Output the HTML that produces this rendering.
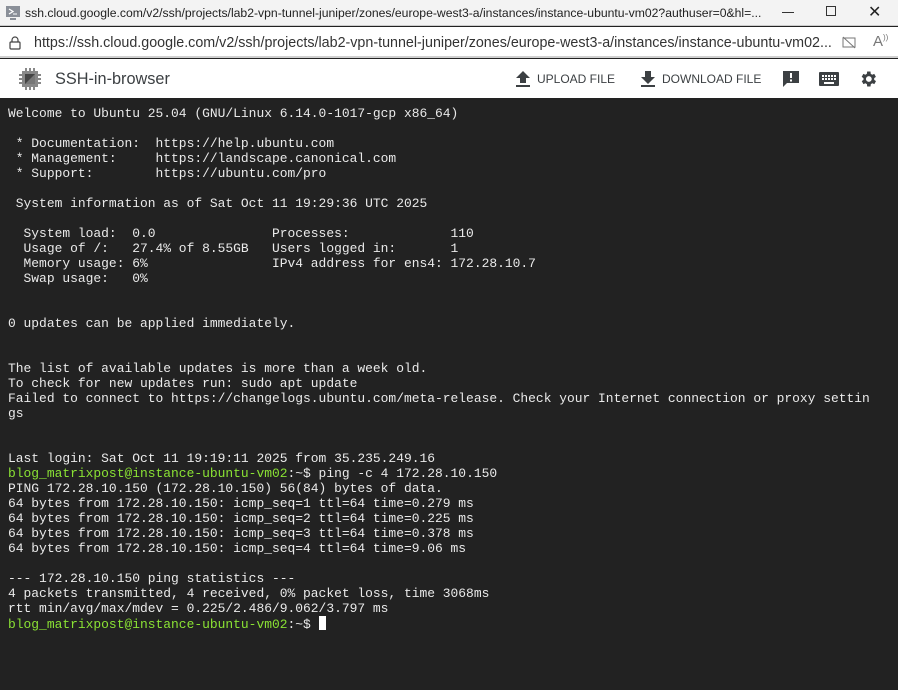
<!DOCTYPE html>
<html><head><meta charset="utf-8"><style>
*{margin:0;padding:0;box-sizing:border-box}
body{width:898px;height:690px;overflow:hidden;background:#222;font-family:"Liberation Sans",sans-serif}
.t1{position:absolute;left:0;top:0;width:898px;height:26px;background:#f3f3f3;border-bottom:1px solid #ccc;font-size:12.2px;color:#222}
.t2{position:absolute;left:0;top:27px;width:898px;height:31px;background:#fff;border-bottom:2px solid #d0d0d0;font-size:14.3px;color:#333}
.bar{position:absolute;left:0;top:59px;width:898px;height:39px;background:#fff}
.term{position:absolute;left:0;top:98px;width:898px;height:592px;background:#222;color:#eaeaea;font-family:"Liberation Mono",monospace;font-size:12.95px;line-height:15px;padding:8px 0 0 8px;white-space:pre}
.g{color:#8ae234}
.cur{display:inline-block;width:7px;height:14px;background:#fff;vertical-align:-2px}
.btn{position:absolute;top:13px;font-size:12px;color:#3c4043}
</style></head><body>
<div class="t1">
<svg style="position:absolute;left:5px;top:5px" width="16" height="16"><rect x="1" y="1" width="14" height="11" fill="#8a8f98"/><rect x="5" y="13" width="6" height="2" fill="#8a8f98"/><path d="M4 4l4 2.5L4 9" stroke="#fff" stroke-width="1.3" fill="none"/><path d="M8 9h4" stroke="#fff"/></svg>
<span style="position:absolute;left:25px;top:6px">ssh.cloud.google.com/v2/ssh/projects/lab2-vpn-tunnel-juniper/zones/europe-west3-a/instances/instance-ubuntu-vm02?authuser=0&amp;hl=...</span>
<span style="position:absolute;left:782px;top:12px;width:12px;height:1px;background:#333"></span>
<span style="position:absolute;left:826px;top:6px;width:10px;height:10px;border:1px solid #333"></span>
<span style="position:absolute;left:868px;top:2px;font-size:16px">✕</span>
</div>
<div class="t2">
<svg style="position:absolute;left:9px;top:9px" width="12" height="14"><path d="M3 6V4a3 3 0 0 1 6 0v2" stroke="#444" fill="none" stroke-width="1.2"/><rect x="1" y="6" width="10" height="7" rx="1" stroke="#444" fill="none" stroke-width="1.2"/></svg>
<span style="position:absolute;left:34px;top:8px">https://ssh.cloud.google.com/v2/ssh/projects/lab2-vpn-tunnel-juniper/zones/europe-west3-a/instances/instance-ubuntu-vm02...</span>
<svg style="position:absolute;left:842px;top:9px" width="14" height="13"><rect x="1" y="2" width="12" height="9" stroke="#777" fill="none"/><path d="M1 1l12 11" stroke="#777"/></svg>
<span style="position:absolute;left:873px;top:6px;font-size:15px;color:#777">A<sup style="font-size:8px">))</sup></span>
</div>
<div class="bar">
<svg style="position:absolute;left:18px;top:8px" width="24" height="24"><g fill="#888"><rect x="4" y="4" width="16" height="16"/><rect x="7" y="1" width="2" height="3"/><rect x="11" y="1" width="2" height="3"/><rect x="15" y="1" width="2" height="3"/><rect x="7" y="20" width="2" height="3"/><rect x="11" y="20" width="2" height="3"/><rect x="15" y="20" width="2" height="3"/><rect x="1" y="7" width="3" height="2"/><rect x="1" y="11" width="3" height="2"/><rect x="1" y="15" width="3" height="2"/><rect x="20" y="7" width="3" height="2"/><rect x="20" y="11" width="3" height="2"/><rect x="20" y="15" width="3" height="2"/></g><rect x="7" y="7" width="10" height="10" fill="#444"/><path d="M7 17L17 7V17Z" fill="#777"/></svg>
<span style="position:absolute;left:55px;top:11px;font-size:16.3px;color:#3c4043">SSH-in-browser</span>
<svg style="position:absolute;left:516px;top:12px" width="14" height="16"><path d="M7 0L0 7h4v5h6V7h4z M0 14h14v2H0z" fill="#3c4043"/></svg>
<span class="btn" style="left:537px">UPLOAD FILE</span>
<svg style="position:absolute;left:641px;top:12px" width="14" height="16"><path d="M4 0h6v6h4l-7 7-7-7h4z M0 14h14v2H0z" fill="#3c4043"/></svg>
<span class="btn" style="left:662px">DOWNLOAD FILE</span>
<svg style="position:absolute;left:782px;top:11px" width="18" height="18"><path d="M1 1h16v12H5l-4 4z" fill="#3c4043"/><rect x="8" y="3" width="2" height="5" fill="#fff"/><rect x="8" y="9.5" width="2" height="2" fill="#fff"/></svg>
<svg style="position:absolute;left:819px;top:13px" width="20" height="14"><rect x="0" y="0" width="20" height="14" rx="1" fill="#3c4043"/><g fill="#fff"><rect x="3" y="3" width="2" height="2"/><rect x="6" y="3" width="2" height="2"/><rect x="9" y="3" width="2" height="2"/><rect x="12" y="3" width="2" height="2"/><rect x="15" y="3" width="2" height="2"/><rect x="3" y="6" width="2" height="2"/><rect x="6" y="6" width="2" height="2"/><rect x="9" y="6" width="2" height="2"/><rect x="12" y="6" width="2" height="2"/><rect x="15" y="6" width="2" height="2"/><rect x="5" y="10" width="10" height="2"/></g></svg>
<svg style="position:absolute;left:858px;top:10px" width="20" height="20" viewBox="0 0 24 24"><path fill="#3c4043" d="M19.4 13a7.5 7.5 0 0 0 0-2l2.1-1.6-2-3.5-2.5 1a7 7 0 0 0-1.7-1L15 3h-4l-.4 2.9a7 7 0 0 0-1.7 1l-2.5-1-2 3.5L6.6 11a7.5 7.5 0 0 0 0 2l-2.1 1.6 2 3.5 2.5-1a7 7 0 0 0 1.7 1L11 21h4l.4-2.9a7 7 0 0 0 1.7-1l2.5 1 2-3.5zM13 15.5a3.5 3.5 0 1 1 0-7 3.5 3.5 0 0 1 0 7z"/></svg>
</div>
<div class="term">Welcome to Ubuntu 25.04 (GNU/Linux 6.14.0-1017-gcp x86_64)

 * Documentation:  https://help.ubuntu.com
 * Management:     https://landscape.canonical.com
 * Support:        https://ubuntu.com/pro

 System information as of Sat Oct 11 19:29:36 UTC 2025

  System load:  0.0               Processes:             110
  Usage of /:   27.4% of 8.55GB   Users logged in:       1
  Memory usage: 6%                IPv4 address for ens4: 172.28.10.7
  Swap usage:   0%


0 updates can be applied immediately.


The list of available updates is more than a week old.
To check for new updates run: sudo apt update
Failed to connect to https://changelogs.ubuntu.com/meta-release. Check your Internet connection or proxy settin
gs


Last login: Sat Oct 11 19:19:11 2025 from 35.235.249.16
<span class="g">blog_matrixpost@instance-ubuntu-vm02</span>:~$ ping -c 4 172.28.10.150
PING 172.28.10.150 (172.28.10.150) 56(84) bytes of data.
64 bytes from 172.28.10.150: icmp_seq=1 ttl=64 time=0.279 ms
64 bytes from 172.28.10.150: icmp_seq=2 ttl=64 time=0.225 ms
64 bytes from 172.28.10.150: icmp_seq=3 ttl=64 time=0.378 ms
64 bytes from 172.28.10.150: icmp_seq=4 ttl=64 time=9.06 ms

--- 172.28.10.150 ping statistics ---
4 packets transmitted, 4 received, 0% packet loss, time 3068ms
rtt min/avg/max/mdev = 0.225/2.486/9.062/3.797 ms
<span class="g">blog_matrixpost@instance-ubuntu-vm02</span>:~$ <span class="cur"></span></div>
</body></html>
